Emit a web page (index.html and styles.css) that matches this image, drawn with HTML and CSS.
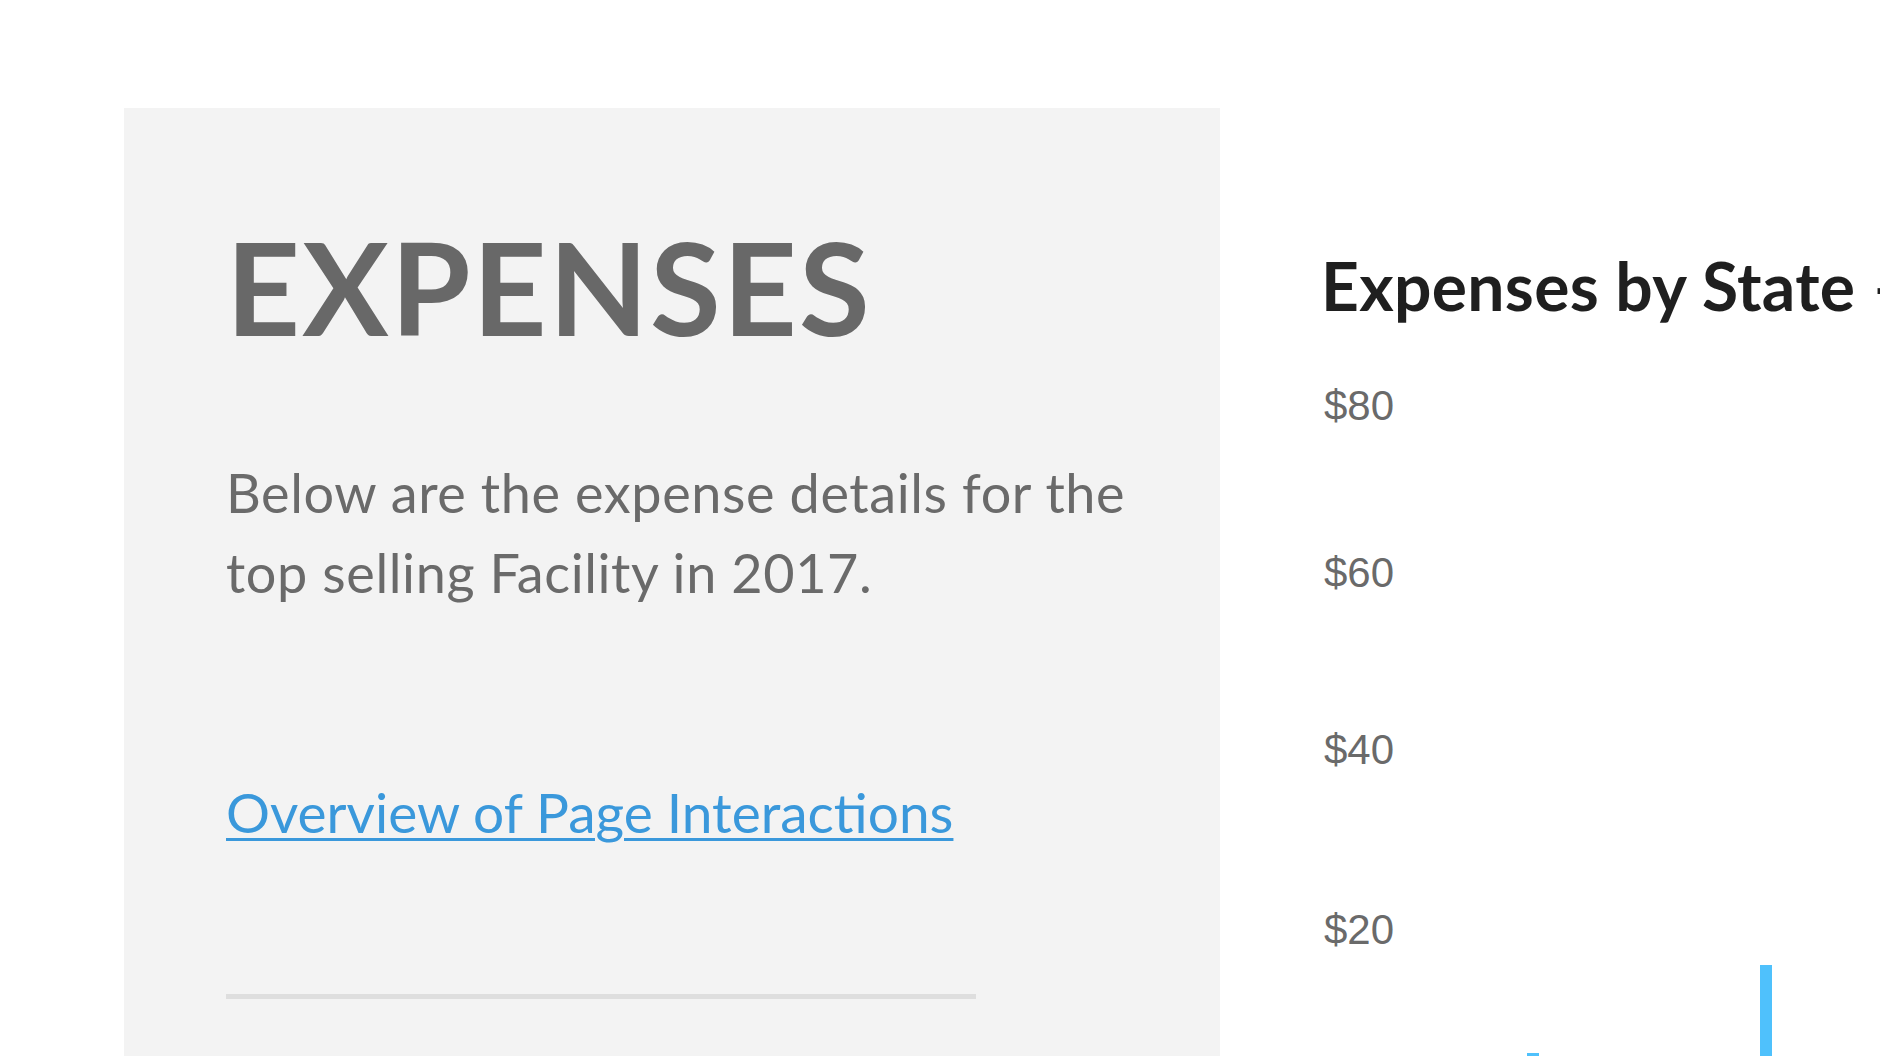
FILE: index.html
```html
<!DOCTYPE html>
<html lang="en">
<head>
<meta charset="utf-8">
<title>Expenses</title>
<link rel="stylesheet" href="styles.css">
</head>
<body>
<div class="page">
  <section class="intro">
    <h1 class="intro-title">EXPENSES</h1>
    <p class="intro-text">Below are the expense details for the top selling Facility in 2017.</p>
    <a class="intro-link" href="#">Overview of Page Interactions</a>
    <hr class="intro-rule">
  </section>
  <section class="chart">
    <h2 class="chart-title">Expenses by State – 2017</h2>
    <div class="chart-body">
      <ul class="axis">
        <li class="axis-label l80">$80</li>
        <li class="axis-label l60">$60</li>
        <li class="axis-label l40">$40</li>
        <li class="axis-label l20">$20</li>
      </ul>
      <div class="plot">
        <span class="bar" style="left:206px;height:46px"></span>
        <span class="bar" style="left:439px;height:134px"></span>
      </div>
    </div>
  </section>
</div>
</body>
</html>
```
FILE: styles.css
```css
html, body {
  margin: 0;
  padding: 0;
  background: #ffffff;
}
body {
  width: 1880px;
  height: 1056px;
  overflow: hidden;
  font-family: "Lato", "Noto Sans", sans-serif;
}
.page {
  display: flex;
  align-items: flex-start;
  padding: 108px 0 0 124px;
}
.intro {
  flex: 0 0 1096px;
  box-sizing: border-box;
  background: #f3f3f3;
  padding: 114px 0 200px 102px;
  display: flex;
  flex-direction: column;
  align-items: flex-start;
}
.intro-title {
  margin: 0;
  font-size: 129px;
  line-height: 1;
  font-weight: 700;
  color: #686868;
  letter-spacing: 2px;
}
.intro-text {
  margin: 102px 0 0;
  width: 930px;
  font-size: 54px;
  line-height: 80px;
  color: #6a6a6a;
  letter-spacing: 0.6px;
}
.intro-link {
  margin-top: 159px;
  font-size: 55px;
  line-height: 80px;
  color: #3a98db;
  text-decoration: underline;
  text-decoration-thickness: 3px;
  text-underline-offset: 5px;
}
.intro-rule {
  margin: 142px 0 0;
  width: 750px;
  height: 5px;
  border: 0;
  background: #dedede;
}
.chart {
  flex: 0 0 auto;
  margin-left: 101px;
  padding-top: 145px;
  white-space: nowrap;
}
.chart-title {
  margin: 0;
  font-size: 66px;
  line-height: 1;
  font-weight: 700;
  color: #1f1f1f;
  letter-spacing: 0.3px;
}
.chart-body {
  position: relative;
  display: flex;
  height: 800px;
}
.axis {
  list-style: none;
  margin: 0;
  padding: 0 0 0 3px;
  display: flex;
  flex-direction: column;
}
.axis-label {
  font-family: "Liberation Sans", Arial, sans-serif;
  font-size: 42px;
  line-height: 1;
  color: #6a6a6a;
}
.l80 { margin-top: 66px; }
.l60 { margin-top: 125px; }
.l40 { margin-top: 135px; }
.l20 { margin-top: 138px; }
.plot {
  position: absolute;
  left: 0;
  top: 0;
  width: 600px;
  height: 780px;
}
.bar {
  position: absolute;
  bottom: 0;
  width: 12px;
  background: #4fc1fc;
}
```
